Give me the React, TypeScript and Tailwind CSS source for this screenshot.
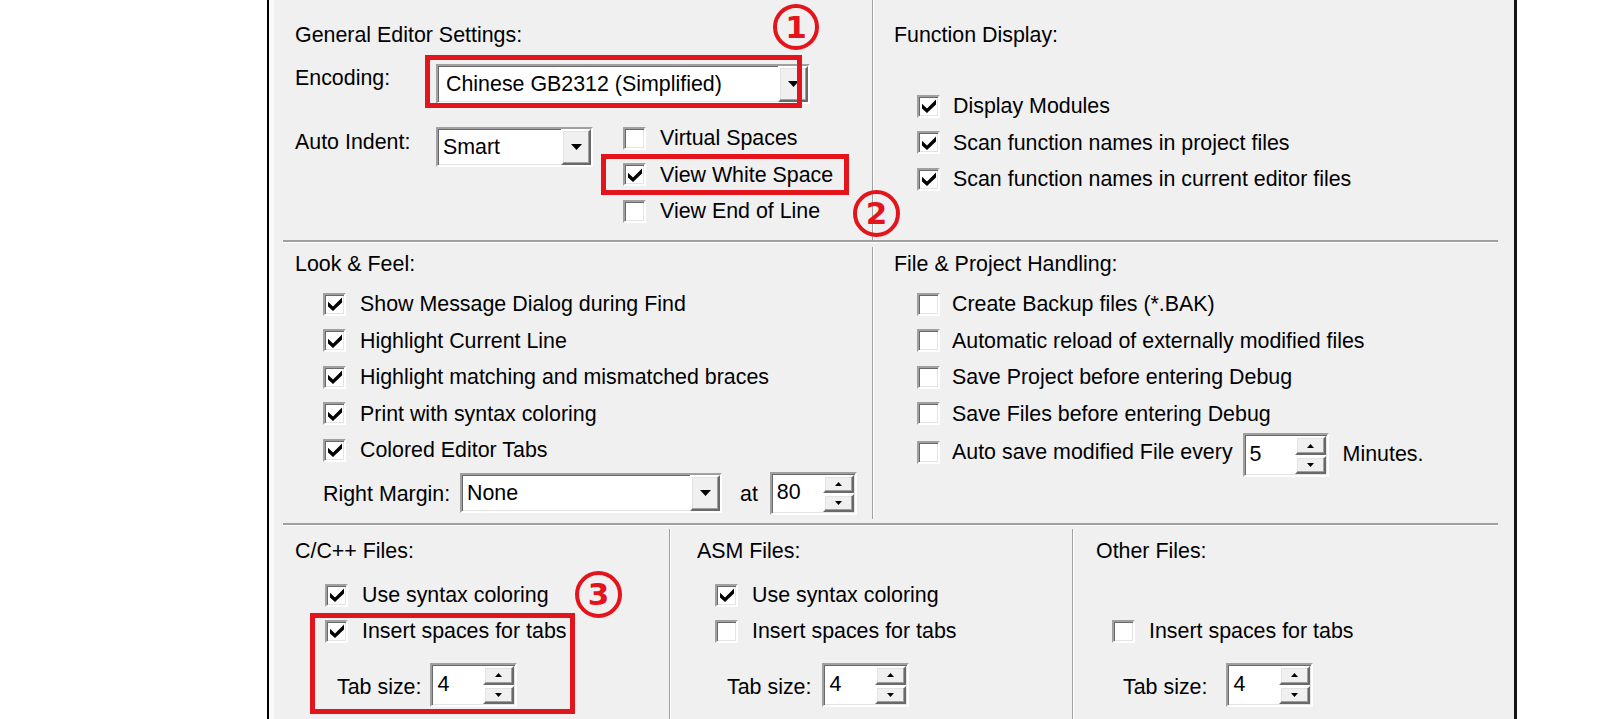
import React from 'react';

// classic win32 3d edges
const sunken =
  'border-2 border-t-[#a0a0a0] border-l-[#a0a0a0] border-r-white border-b-white shadow-[inset_1px_1px_0_#696969,inset_-1px_-1px_0_#e3e3e3]';
const raised =
  'border-2 border-t-white border-l-white border-r-[#696969] border-b-[#696969] bg-[#f0f0f0] shadow-[inset_-1px_-1px_0_#a0a0a0,inset_1px_1px_0_#e3e3e3]';

function Check({ on }: { on?: boolean }) {
  return (
    <span className={`flex h-[23px] w-[23px] shrink-0 items-center justify-center bg-white ${sunken}`}>
      {on && (
        <svg width="14" height="14" viewBox="0 0 7 7" className="block">
          <polygon points="0,2.4 2.5,4.7 7,0.2 7,2.8 2.5,7 0,4.8" fill="#000" />
        </svg>
      )}
    </span>
  );
}

function CheckRow({ label, on, h = 'h-[36.5px]', gap = 'gap-[14px]' }: { label: string; on?: boolean; h?: string; gap?: string }) {
  return (
    <div className={`flex items-center ${h} ${gap}`}>
      <Check on={on} />
      <span className="whitespace-nowrap">{label}</span>
    </div>
  );
}

function Combo({ text, className, pad }: { text: string; className: string; pad: string }) {
  return (
    <div className={`flex shrink-0 bg-white ${sunken} ${className}`}>
      <span className={`flex flex-1 items-center whitespace-nowrap ${pad}`}>{text}</span>
      <span className={`flex w-[30px] items-center justify-center ${raised}`}>
        <svg width="11" height="6" viewBox="0 0 11 6">
          <polygon points="0,0 11,0 5.5,6" fill="#000" />
        </svg>
      </span>
    </div>
  );
}

function Spin({ value, className }: { value: string; className: string }) {
  return (
    <div className={`flex shrink-0 bg-white ${sunken} ${className}`}>
      <span className="flex flex-1 items-center pb-[3px] pl-[5px]">{value}</span>
      <span className="flex w-[32px] flex-col gap-[1px] py-[1px] pr-[1px]">
        <span className={`flex flex-1 items-center justify-center ${raised}`}>
          <svg width="7" height="4" viewBox="0 0 7 4">
            <polygon points="3.5,0 7,4 0,4" fill="#000" />
          </svg>
        </span>
        <span className={`flex flex-1 items-center justify-center ${raised}`}>
          <svg width="7" height="4" viewBox="0 0 7 4">
            <polygon points="0,0 7,0 3.5,4" fill="#000" />
          </svg>
        </span>
      </span>
    </div>
  );
}

const Sep = () => <div className="h-[3px] shrink-0 border-t-2 border-t-[#a0a0a0] bg-white" />;

const VLine = ({ className = '' }: { className?: string }) => (
  <div className={`w-[2px] shrink-0 border-l border-l-[#a0a0a0] bg-white ${className}`} />
);

export default function App() {
  return (
    <div className="relative flex h-[719px] w-full overflow-hidden bg-white font-['Liberation_Sans',Arial,sans-serif] text-[21.4px] leading-[24px] text-black">
      <div className="w-[267px] shrink-0" />

      <div className="flex h-full w-[1250px] shrink-0 border-l-2 border-r-[3px] border-l-black border-r-[#151515] bg-[#f0f0f0]">
        <div className="w-[5px] shrink-0 bg-[#fafafa]" />
        <div className="flex flex-1 flex-col pl-[9px] pr-[16px]">
          {/* top: editor settings + function display */}
          <div className="flex h-[240px] shrink-0">
            <div className="w-[589px] shrink-0 pl-[12px] pt-[23px]">
              <div>General Editor Settings:</div>
              <div className="mt-[17px] flex items-start">
                <div className="mt-[2px] w-[141px] shrink-0">Encoding:</div>
                <Combo text="Chinese GB2312 (Simplified)" className="h-[40px] w-[374px]" pad="pl-[8px]" />
              </div>
              <div className="mt-[16px] flex items-start">
                <div className="mt-[10px] w-[141px] shrink-0">Auto Indent:</div>
                <Combo text="Smart" className="mt-[7px] h-[40px] w-[157px]" pad="pl-[5px]" />
                <div className="ml-[30px] flex flex-col">
                  <CheckRow label="Virtual Spaces" />
                  <CheckRow label="View White Space" on />
                  <CheckRow label="View End of Line" />
                </div>
              </div>
            </div>
            <VLine />
            <div className="flex-1 pt-[23px]">
              <div className="pl-[20px]">Function Display:</div>
              <div className="mt-[41px] pl-[43px]">
                <CheckRow label="Display Modules" on gap="gap-[13px]" />
                <CheckRow label="Scan function names in project files" on gap="gap-[13px]" />
                <CheckRow label="Scan function names in current editor files" on gap="gap-[13px]" />
              </div>
            </div>
          </div>

          <Sep />

          {/* middle: look & feel + file handling */}
          <div className="flex h-[280px] shrink-0">
            <div className="w-[589px] shrink-0 pt-[9px]">
              <div className="pl-[12px]">Look &amp; Feel:</div>
              <div className="mt-[10px] pl-[40px]">
                <CheckRow label="Show Message Dialog during Find" on />
                <CheckRow label="Highlight Current Line" on />
                <CheckRow label="Highlight matching and mismatched braces" on />
                <CheckRow label="Print with syntax coloring" on />
                <CheckRow label="Colored Editor Tabs" on />
              </div>
              <div className="mt-[3px] flex items-start pl-[40px]">
                <div className="mt-[10px] w-[137px] shrink-0 whitespace-nowrap">Right Margin:</div>
                <Combo text="None" className="mt-[1px] h-[40px] w-[262px]" pad="pl-[5px]" />
                <div className="ml-[18px] mt-[10px]">at</div>
                <Spin value="80" className="ml-[12px] h-[43px] w-[87px]" />
              </div>
            </div>
            <VLine className="mt-[4px] mb-[4px]" />
            <div className="flex-1 pt-[9px]">
              <div className="pl-[20px]">File &amp; Project Handling:</div>
              <div className="mt-[10px] pl-[43px]">
                <CheckRow label="Create Backup files (*.BAK)" gap="gap-[12px]" />
                <CheckRow label="Automatic reload of externally modified files" gap="gap-[12px]" />
                <CheckRow label="Save Project before entering Debug" gap="gap-[12px]" />
                <CheckRow label="Save Files before entering Debug" gap="gap-[12px]" />
                <div className="mt-[2px] flex h-[36.5px] items-center gap-[12px]">
                  <Check />
                  <span className="whitespace-nowrap">Auto save modified File every</span>
                  <Spin value="5" className="ml-[-2px] mt-[6px] h-[44px] w-[86px]" />
                  <span className="ml-[2px] mt-[4px]">Minutes.</span>
                </div>
              </div>
            </div>
          </div>

          <Sep />

          {/* bottom: per-language settings */}
          <div className="flex flex-1">
            <div className="w-[386px] shrink-0 pt-[13px]">
              <div className="pl-[12px]">C/C++ Files:</div>
              <div className="mt-[14px] pl-[42px]">
                <CheckRow label="Use syntax coloring" on h="h-[36px]" />
                <CheckRow label="Insert spaces for tabs" on h="h-[36px]" />
              </div>
              <div className="mt-[14px] flex items-start pl-[54px]">
                <span className="mt-[12px] whitespace-nowrap">Tab size:</span>
                <Spin value="4" className="ml-[9px] h-[44px] w-[87px]" />
              </div>
            </div>
            <VLine className="mt-[3px]" />
            <div className="w-[401px] shrink-0 pt-[13px]">
              <div className="pl-[26px]">ASM Files:</div>
              <div className="mt-[14px] pl-[44px]">
                <CheckRow label="Use syntax coloring" on h="h-[36px]" />
                <CheckRow label="Insert spaces for tabs" h="h-[36px]" />
              </div>
              <div className="mt-[14px] flex items-start pl-[56px]">
                <span className="mt-[12px] whitespace-nowrap">Tab size:</span>
                <Spin value="4" className="ml-[11px] h-[44px] w-[87px]" />
              </div>
            </div>
            <VLine className="mt-[3px]" />
            <div className="flex-1 pt-[13px]">
              <div className="pl-[22px]">Other Files:</div>
              <div className="mt-[14px] pl-[38px]">
                <div className="h-[36px]" />
                <CheckRow label="Insert spaces for tabs" h="h-[36px]" />
              </div>
              <div className="mt-[14px] flex items-start pl-[49px]">
                <span className="mt-[12px] whitespace-nowrap">Tab size:</span>
                <Spin value="4" className="ml-[19px] h-[44px] w-[87px]" />
              </div>
            </div>
          </div>
        </div>
      </div>

      {/* red annotation overlays */}
      <div className="absolute left-[425px] top-[55px] h-[53px] w-[377px] border-[5px] border-[#e3141c]" />
      <div className="absolute left-[601px] top-[154px] h-[41px] w-[248px] border-[5px] border-[#e3141c]" />
      <div className="absolute left-[310px] top-[613px] h-[101px] w-[265px] border-[5px] border-[#e3141c]" />

      <div className="absolute left-[773px] top-[4px] flex h-[46px] w-[46px] items-center justify-center rounded-full border-4 border-[#e3141c] font-['DejaVu_Sans',sans-serif] text-[31px] font-bold leading-none text-[#e3141c]">
        1
      </div>
      <div className="absolute left-[853px] top-[190px] flex h-[47px] w-[47px] items-center justify-center rounded-full border-4 border-[#e3141c] font-['DejaVu_Sans',sans-serif] text-[31px] font-bold leading-none text-[#e3141c]">
        2
      </div>
      <div className="absolute left-[575px] top-[571px] flex h-[47px] w-[47px] items-center justify-center rounded-full border-4 border-[#e3141c] font-['DejaVu_Sans',sans-serif] text-[31px] font-bold leading-none text-[#e3141c]">
        3
      </div>
    </div>
  );
}
